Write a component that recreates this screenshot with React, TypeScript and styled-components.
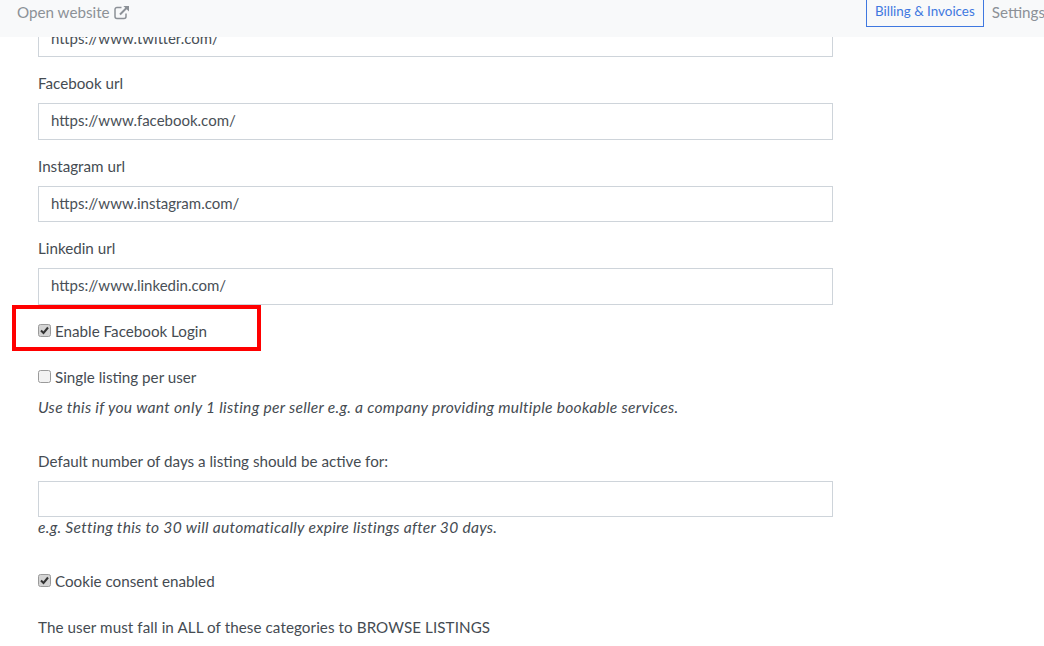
import React from 'react';
import styled, { createGlobalStyle } from 'styled-components';

const GlobalStyle = createGlobalStyle`
  html, body {
    margin: 0;
    padding: 0;
    height: 646px;
    overflow: hidden;
    background: #fff;
  }
  * {
    box-sizing: border-box;
  }
`;

const Page = styled.div`
  position: relative;
  width: 1044px;
  height: 646px;
  overflow: hidden;
  font-family: Lato, "Open Sans", sans-serif;
  font-size: 15.2px;
  line-height: 23px;
  color: #495057;
`;

const TopBar = styled.header`
  position: absolute;
  top: 0;
  left: 0;
  right: 0;
  height: 37px;
  background: #f8f9fa;
  display: flex;
  justify-content: space-between;
  align-items: flex-start;
  padding-left: 17px;
  overflow: hidden;
  z-index: 2;
`;

const SiteLink = styled.a`
  display: flex;
  align-items: center;
  gap: 4px;
  height: 25px;
  color: #8c9197;
`;

const Tabs = styled.nav`
  display: flex;
  align-items: flex-start;
  margin-right: -9px;
`;

const Tab = styled.a<{ $active?: boolean }>`
  height: 27px;
  padding: 0 ${(props) => (props.$active ? '8px' : '7px')};
  line-height: 23px;
  white-space: nowrap;
  font-size: ${(props) => (props.$active ? '13.4px' : '15.2px')};
  color: ${(props) => (props.$active ? '#3f78e0' : '#8c9197')};
  border: 1px solid ${(props) => (props.$active ? '#3f78e0' : 'transparent')};
  border-top: none;
  padding-top: ${(props) => (props.$active ? '0' : '1px')};
`;

const Content = styled.main`
  width: 795px;
  margin-left: 38px;
  padding-top: 20.6px;
  display: flex;
  flex-direction: column;
`;

const Field = styled.div`
  margin-bottom: 15px;
`;

const Label = styled.label`
  display: block;
  margin-bottom: 8px;
  color: #454b52;
`;

const TextInput = styled.input`
  display: block;
  width: 100%;
  height: 36.5px;
  padding: 0 12px 2px;
  border: 1px solid #ced4da;
  border-radius: 0;
  background: #fff;
  font: inherit;
  font-size: 15px;
  color: #495057;
  outline: none;
`;

const CheckRow = styled.div<{ $after: number }>`
  position: relative;
  display: flex;
  align-items: center;
  gap: 4px;
  height: 23px;
  margin-bottom: ${(props) => props.$after}px;
  color: #454b52;
`;

const Box = styled.span<{ $checked?: boolean }>`
  width: 13px;
  height: 13px;
  margin-top: -2px;
  border: 1px solid #9a9a9a;
  border-radius: 2.5px;
  background: ${(props) => (props.$checked ? '#d4d4d4' : '#f2f2f2')};
  display: flex;
  align-items: center;
  justify-content: center;
`;

const Highlight = styled.div`
  position: absolute;
  left: -26px;
  top: -15px;
  width: 249px;
  height: 46px;
  border: 4px solid #ff0000;
  pointer-events: none;
`;

const Hint = styled.p<{ $after: number }>`
  margin: 0 0 ${(props) => props.$after}px;
  font-style: italic;
  font-size: 15.6px;
  letter-spacing: 0.28px;
  line-height: 21px;
  color: #454b52;
`;

const Plain = styled.p`
  margin: 0;
  letter-spacing: 0.08px;
  color: #454b52;
`;

const LinkIcon = () => (
  <svg width="16" height="15" viewBox="0 0 16 15" fill="none" stroke="#8c9197" strokeWidth="1.5">
    <path d="M12 8.5v3a2 2 0 0 1-2 2h-7a2 2 0 0 1-2-2v-7a2 2 0 0 1 2-2h4.5" />
    <path d="M6 9.5 13 2.5" strokeWidth="2" />
    <path d="M9.4 1h5.6v5.6z" fill="#8c9197" stroke="none" />
  </svg>
);

const Tick = () => (
  <svg width="9" height="9" viewBox="0 0 9 9" fill="none" stroke="#333" strokeWidth="2">
    <path d="M1 4.5 3.5 7 8 1.5" />
  </svg>
);

const Check = ({ checked, children }: { checked?: boolean; children: React.ReactNode }) => (
  <>
    <Box $checked={checked}>{checked && <Tick />}</Box>
    <span>{children}</span>
  </>
);

const urls = [
  { label: 'Facebook url', value: 'https://www.facebook.com/' },
  { label: 'Instagram url', value: 'https://www.instagram.com/' },
  { label: 'Linkedin url', value: 'https://www.linkedin.com/' },
];

const App = () => {
  return (
    <Page>
      <GlobalStyle />
      <TopBar>
        <SiteLink>
          Open website <LinkIcon />
        </SiteLink>
        <Tabs>
          <Tab $active>Billing &amp; Invoices</Tab>
          <Tab>Settings</Tab>
        </Tabs>
      </TopBar>
      <Content>
        <Field>
          <TextInput defaultValue="https://www.twitter.com/" readOnly />
        </Field>
        {urls.map((url) => (
          <Field key={url.label}>
            <Label>{url.label}</Label>
            <TextInput defaultValue={url.value} readOnly />
          </Field>
        ))}
        <CheckRow $after={23}>
          <Check checked>Enable Facebook Login</Check>
          <Highlight />
        </CheckRow>
        <CheckRow $after={8}>
          <Check>Single listing per user</Check>
        </CheckRow>
        <Hint $after={32}>
          Use this if you want only 1 listing per seller e.g. a company providing multiple bookable services.
        </Hint>
        <Label>Default number of days a listing should be active for:</Label>
        <TextInput readOnly />
        <Hint $after={31.5}>
          e.g. Setting this to 30 will automatically expire listings after 30 days.
        </Hint>
        <CheckRow $after={23}>
          <Check checked>Cookie consent enabled</Check>
        </CheckRow>
        <Plain>The user must fall in ALL of these categories to BROWSE LISTINGS</Plain>
      </Content>
    </Page>
  );
};

export default App;
